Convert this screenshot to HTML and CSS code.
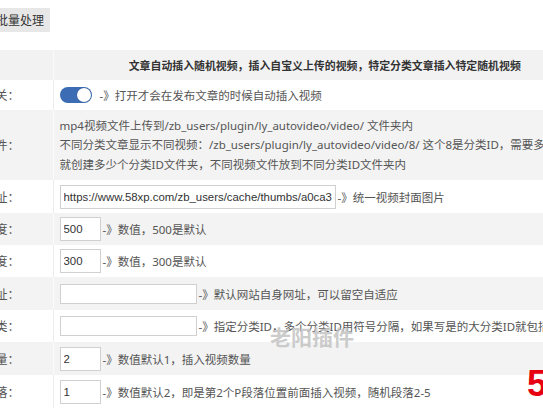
FILE: index.html
```html
<!DOCTYPE html>
<html lang="zh-CN">
<head>
<meta charset="utf-8">
<title>批量处理</title>
<link rel="stylesheet" href="styles.css">
</head>
<body>
<div class="page">
  <div class="toolbar"><button class="btn">批量处理</button></div>
  <table class="form">
    <colgroup><col class="c1"><col class="c2"></colgroup>
    <tr class="head">
      <th class="lab"><span>设置项</span></th>
      <th class="title">文章自动插入随机视频，插入自宝义上传的视频，特定分类文章插入特定随机视频</th>
    </tr>
    <tr class="r-switch">
      <td class="lab"><span>插件开关：</span></td>
      <td><div class="line"><span class="toggle"><span class="knob"></span></span><span class="hint">-》打开才会在发布文章的时候自动插入视频</span></div></td>
    </tr>
    <tr class="alt r-text">
      <td class="lab"><span>视频文件：</span></td>
      <td class="multi">
        <div>mp4视频文件上传到/zb_users/plugin/ly_autovideo/video/ 文件夹内</div>
        <div>不同分类文章显示不同视频：/zb_users/plugin/ly_autovideo/video/8/ 这个8是分类ID，需要多少个分类</div>
        <div>就创建多少个分类ID文件夹，不同视频文件放到不同分类ID文件夹内</div>
      </td>
    </tr>
    <tr class="h33">
      <td class="lab"><span>封面图片地址：</span></td>
      <td><div class="line"><input class="inp w-url" value="https://www.58xp.com/zb_users/cache/thumbs/a0ca3a8.jpg"><span class="hint">-》统一视频封面图片</span></div></td>
    </tr>
    <tr class="alt">
      <td class="lab"><span>视频宽度：</span></td>
      <td><div class="line"><input class="inp w-num" value="500"><span class="hint">-》数值，500是默认</span></div></td>
    </tr>
    <tr>
      <td class="lab"><span>视频高度：</span></td>
      <td><div class="line"><input class="inp w-num" value="300"><span class="hint">-》数值，300是默认</span></div></td>
    </tr>
    <tr class="alt h33">
      <td class="lab"><span>网站地址：</span></td>
      <td><div class="line"><input class="inp w-mid short" value=""><span class="hint">-》默认网站自身网址，可以留空自适应</span></div></td>
    </tr>
    <tr>
      <td class="lab"><span>指定分类：</span></td>
      <td><div class="line"><input class="inp w-mid short" value=""><span class="hint">-》指定分类ID，多个分类ID用符号分隔，如果写是的大分类ID就包括子分类</span></div></td>
    </tr>
    <tr class="alt h33">
      <td class="lab"><span>插入数量：</span></td>
      <td><div class="line"><input class="inp w-num" value="2"><span class="hint">-》数值默认1，插入视频数量</span></div></td>
    </tr>
    <tr class="h33">
      <td class="lab"><span>插入段落：</span></td>
      <td><div class="line"><input class="inp w-num" value="1"><span class="hint">-》数值默认2，即是第2个P段落位置前面插入视频，随机段落2-5</span></div></td>
    </tr>
  </table>
  <div class="watermark">老阳插件</div>
  <div class="redmark">5</div>
</div>
</body>
</html>
```

FILE: styles.css
```css
html, body {
  margin: 0;
  padding: 0;
  background: #fff;
  overflow: hidden;
}
body {
  width: 543px;
  height: 408px;
  font-family: "Noto Sans", "Noto Sans CJK SC", sans-serif;
  font-size: 11.5px;
  color: #555;
}
.page {
  position: relative;
  width: 543px;
  height: 408px;
  overflow: hidden;
}
.toolbar {
  padding-top: 8px;
  height: 24px;
  margin-bottom: 18px;
}
.btn {
  margin-left: -10px;
  height: 24px;
  padding: 0 6px;
  border: 0;
  background: #e7e7e7;
  color: #333;
  font-family: "Noto Sans CJK SC", sans-serif;
  font-size: 12px;
  line-height: 24px;
}
.form {
  border-collapse: collapse;
  width: 600px;
  table-layout: fixed;
}
.c1 { width: 53px; }
.c2 { width: 547px; }
.form th, .form td {
  padding: 0 6px;
  vertical-align: middle;
  white-space: nowrap;
  overflow: hidden;
}
.form td.lab, .form th.lab {
  padding: 0 33px 0 0;
  border-right: 1px solid #ececec;
  font-size: 12px;
}
.lab span {
  display: flex;
  justify-content: flex-end;
}
tr.head { background: #f2f2f2; height: 30px; }
tr.head th { font-weight: bold; color: #333; text-align: center; font-size: 10.9px; }
tr.head th.title { padding-left: 2px; }
tr.head th.lab { border-right-color: #fafafa; }
tr.head th.lab span { visibility: hidden; }
tr.alt { background: #f3f3f3; }
tr.alt td.lab { border-right-color: #fbfbfb; }
tr { height: 32px; }
tr.h33 { height: 33px; }
tr.r-switch { height: 30px; }
tr.r-text { height: 70px; }
.multi div {
  line-height: 19.5px;
}
.line {
  display: flex;
  align-items: center;
}
.hint { margin-left: 2px; }
.toggle {
  position: relative;
  display: inline-block;
  width: 32px;
  height: 16px;
  border-radius: 8px;
  background: #3b6cb4;
  margin-right: 6px;
}
.knob {
  position: absolute;
  right: 1px;
  top: 1px;
  width: 14px;
  height: 14px;
  border-radius: 50%;
  background: #fff;
  box-shadow: 0 0 1px rgba(0,0,0,0.4);
}
.inp {
  box-sizing: border-box;
  height: 24px;
  padding: 0 3px;
  margin: 0;
  border: 1px solid #d0d0d0;
  background: #fff;
  color: #333;
  font-family: "Liberation Sans", Arial, sans-serif;
  font-size: 11.4px;
}
.inp.short { height: 20px; }
.w-url { width: 276px; }
.w-num { width: 41px; }
.w-mid { width: 137px; }
.watermark {
  position: absolute;
  left: 270px;
  top: 321px;
  font-family: "Noto Sans CJK SC", sans-serif;
  font-weight: bold;
  font-size: 21px;
  color: #c4c4c4;
  opacity: 0.85;
}
.redmark {
  position: absolute;
  left: 527px;
  top: 364px;
  font-family: "Liberation Sans", Arial, sans-serif;
  font-weight: bold;
  font-size: 36px;
  line-height: 40px;
  color: #e60012;
}
```
